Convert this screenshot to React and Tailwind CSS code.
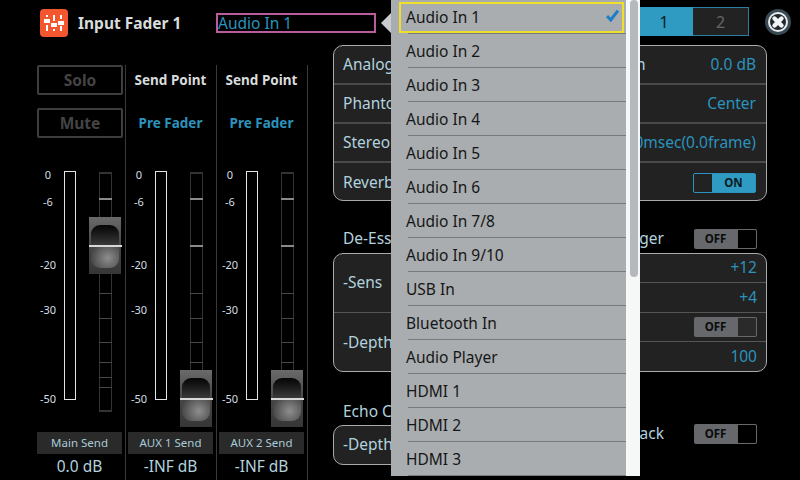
const font = { fontFamily: '"Noto Sans", "Open Sans", sans-serif' };

const scale = [
  { text: "0", y: 9 },
  { text: "-6", y: 36 },
  { text: "-20", y: 99 },
  { text: "-30", y: 144 },
  { text: "-50", y: 233 },
];

const ticks = [
  { y: 33, bright: true },
  { y: 80, bright: true },
  { y: 128 },
  { y: 153 },
  { y: 177 },
  { y: 197 },
  { y: 212 },
  { y: 222 },
];

const menuItems = [
  "Audio In 1",
  "Audio In 2",
  "Audio In 3",
  "Audio In 4",
  "Audio In 5",
  "Audio In 6",
  "Audio In 7/8",
  "Audio In 9/10",
  "USB In",
  "Bluetooth In",
  "Audio Player",
  "HDMI 1",
  "HDMI 2",
  "HDMI 3",
];

function Logo() {
  return (
    <div className="w-[28px] h-[28px] mt-[9px] rounded-[4px] bg-[#f4572f] shrink-0">
      <svg width="28" height="28" viewBox="0 0 28 28" fill="#fff">
        <rect x="6" y="6" width="2" height="2" />
        <rect x="4" y="10" width="6" height="4" />
        <rect x="6" y="16" width="2" height="6" />
        <rect x="13" y="6" width="2" height="6" />
        <rect x="11" y="14" width="6" height="4" />
        <rect x="13" y="20" width="2" height="2" />
        <rect x="20" y="6" width="2" height="4" />
        <rect x="18" y="12" width="6" height="4" />
        <rect x="20" y="17" width="2" height="5" />
      </svg>
    </div>
  );
}

function CloseIcon() {
  return (
    <svg width="26" height="26" viewBox="0 0 26 26" className="mt-[9px] ml-[16px] shrink-0">
      <circle cx="13" cy="13" r="13" fill="#3a4a55" />
      <circle cx="13" cy="13" r="10" fill="#e8eef0" />
      <circle cx="13" cy="13" r="8" fill="#20282e" />
      <path d="M9.5 9.5l7 7M16.5 9.5l-7 7" stroke="#f2f5f6" strokeWidth="4.4" strokeLinecap="round" />
    </svg>
  );
}

function Knob({ y }) {
  return (
    <div
      className="absolute left-[52px] w-[32px] h-[57px] bg-linear-to-b from-[#6a6a6a] via-[#474747] to-[#363636]"
      style={{ top: y }}
    >
      <div className="absolute left-[2px] right-[2px] top-[8px] h-[20px] rounded-t-[9px] bg-linear-to-b from-[#060606] to-[#3a3a3a]" />
      <div className="absolute left-[2px] right-[2px] top-[29px] h-[22px] rounded-b-[9px] bg-[radial-gradient(circle_at_60%_55%,#8e8e8e,#444_85%)]" />
      <div className="absolute left-0 right-[-1px] top-[28px] h-[2px] bg-[#d8d8d8]" />
    </div>
  );
}

function Fader({ knobY }) {
  return (
    <div className="relative h-[264px]">
      {scale.map((s) => (
        <span
          key={s.text}
          className="absolute left-0 w-[22px] -translate-y-1/2 text-center text-[11px] leading-none text-[#d4dfe4]"
          style={{ top: s.y }}
        >
          {s.text}
        </span>
      ))}
      <div className="absolute left-[27px] top-[6px] w-[12px] h-[229px] border border-[#e4e4e4]" />
      <div className="absolute left-[62px] top-[7px] w-[13px] h-[240px] border border-[#333] border-y-2" />
      {ticks.map((t) => (
        <div
          key={t.y}
          className={
            t.bright
              ? "absolute left-[62px] w-[13px] h-[2px] bg-[#8a8a8a]"
              : "absolute left-[62px] w-[13px] h-[1px] bg-[#484848]"
          }
          style={{ top: t.y }}
        />
      ))}
      <Knob y={knobY} />
    </div>
  );
}

function StripFooter({ label, value }) {
  return (
    <>
      <div className="mt-[3px] h-[22px] bg-[#2a2a2a] flex items-center justify-center text-[11.5px] text-[#a9cad8]">
        {label}
      </div>
      <div className="h-[26px] flex items-center justify-center text-[15.5px] text-[#b2d2df]">
        {value}
      </div>
    </>
  );
}

function SendHead() {
  return (
    <div className="h-[100px] flex flex-col items-center font-bold text-[13.5px]">
      <div className="h-[30px] flex items-center text-[#d8dcdc]">Send Point</div>
      <div className="h-[13px]" />
      <div className="h-[30px] flex items-center text-[#2b93bd]">Pre Fader</div>
    </div>
  );
}

function SendStrip({ label }) {
  return (
    <div className="w-[91px] h-full pl-[2px] border-r border-[#3a3a3a]">
      <div className="w-[85px]">
        <SendHead />
        <Fader knobY={205} />
        <StripFooter label={label} value="-INF dB" />
      </div>
    </div>
  );
}

function MainStrip() {
  return (
    <div className="w-[89px] h-full border-r border-[#3a3a3a]">
      <div className="w-[85px]">
        <div className="h-[100px] flex flex-col gap-[13px] w-[86px]">
          <div className="h-[30px] border-2 border-[#3e3e3e] rounded-[2px] pt-[1px] flex items-center justify-center font-bold text-[15.5px] text-[#444]">
            Solo
          </div>
          <div className="h-[30px] border-2 border-[#3e3e3e] rounded-[2px] pt-[1px] flex items-center justify-center font-bold text-[15.5px] text-[#444]">
            Mute
          </div>
        </div>
        <Fader knobY={52} />
        <StripFooter label="Main Send" value="0.0 dB" />
      </div>
    </div>
  );
}

function Toggle({ on, box }) {
  if (on) {
    return (
      <div className="w-[63px] h-[20px] rounded-[2px] border border-[#2b93bd] bg-[#2f9bc2] flex overflow-hidden">
        <div className="w-[18px] bg-[#222]" />
        <div className="flex-1 flex items-center justify-center text-[11.5px] font-bold text-[#0c1a20]">ON</div>
      </div>
    );
  }
  return (
    <div className="w-[63px] h-[20px] rounded-[2px] bg-[#66686c] flex overflow-hidden shrink-0">
      <div className="flex-1 flex items-center justify-center text-[11.5px] font-bold text-[#0b0b0b]">OFF</div>
      <div className={box + " w-[20px] border border-[#66686c] rounded-r-[2px]"} />
    </div>
  );
}

function Row({ label, children, last }) {
  return (
    <div
      className={
        last
          ? "h-[39px] flex items-center justify-between pl-[9px] pr-[10px]"
          : "h-[39px] flex items-center justify-between pl-[9px] pr-[10px] border-b-2 border-[#4a4a4a]"
      }
    >
      <span>{label}</span>
      {children}
    </div>
  );
}

function RightPanel() {
  return (
    <div className="ml-[25px] w-[434px] text-[15.5px] text-[#b2d2df]">
      <div className="h-[156px] border border-[#aaa] rounded-[10px] bg-[#222] overflow-hidden">
        <Row label="Analog">
          <span className="ml-auto mr-[65px]">Gain</span>
          <span className="text-[#2b93bd]">0.0 dB</span>
        </Row>
        <Row label="Phantom">
          <span className="text-[#2b93bd]">Center</span>
        </Row>
        <Row label="Stereo">
          <span className="text-[#2b93bd]">0.0msec(0.0frame)</span>
        </Row>
        <Row label="Reverb" last>
          <Toggle on />
        </Row>
      </div>

      <div className="mt-[26px] h-[24px] flex items-center pl-[10px] pr-[10px]">
        <span>De-Esser</span>
        <span className="ml-auto mr-[30px]">Trigger</span>
        <Toggle box="bg-black" />
      </div>

      <div className="mt-[2px] h-[119px] border border-[#aaa] rounded-[10px] bg-[#222] overflow-hidden flex">
        <div className="w-[200px] flex flex-col">
          <div className="h-[59px] flex items-center pl-[9px] border-b border-[#555]">-Sens</div>
          <div className="flex-1 flex items-center pl-[9px] pt-[2px]">-Depth</div>
        </div>
        <div className="flex-1 flex flex-col">
          <div className="h-[29px] flex items-center justify-end pr-[9px] border-b border-[#555] text-[#2b93bd]">+12</div>
          <div className="h-[30px] flex items-center justify-end pr-[9px] border-b border-[#555] text-[#2b93bd]">+4</div>
          <div className="h-[29px] flex items-center justify-end pr-[9px] border-b border-[#555]">
            <Toggle box="bg-[#2a2a2a]" />
          </div>
          <div className="flex-1 flex items-center justify-end pr-[9px] text-[#2b93bd]">100</div>
        </div>
      </div>

      <div className="mt-[28px] flex">
        <div className="w-[200px]">
          <div className="h-[24px] flex items-center pl-[10px]">Echo C</div>
          <div className="mt-[1px] h-[40px] border border-[#aaa] rounded-[10px] bg-[#222] flex items-center pl-[9px]">
            -Depth
          </div>
        </div>
        <div className="flex-1 mt-[24px] h-[20px] flex items-center justify-end pr-[10px]">
          <span className="mr-[30px]">Feedback</span>
          <Toggle box="bg-black" />
        </div>
      </div>
    </div>
  );
}

function Dropdown() {
  return (
    <>
      <div className="absolute left-[381px] top-[13px] w-0 h-0 border-y-[10px] border-y-transparent border-r-[10px] border-r-[#c9cccc]" />
      <div className="absolute left-[391px] top-0 w-[249px] h-[476px] flex bg-[#a9adb0] text-[15.5px] text-[#161616]">
        <div className="w-[235px]">
          {menuItems.map((item, i) => (
            <div key={item} className="relative h-[34px] pl-[15px] pt-[1px] flex items-center">
              <span className="leading-none">{item}</span>
              <div className="absolute left-[17px] right-0 bottom-0 h-[1px] bg-[#777b7e]" />
              {i === 0 && (
                <>
                  <div className="absolute left-[8px] right-[2px] top-[2px] h-[31px] border-2 border-[#eee02a]" />
                  <svg width="13" height="13" viewBox="0 0 12 12" className="absolute left-[215px] top-[9px]">
                    <path d="M1 6.5l3.4 3.6L11 1.5" fill="none" stroke="#1a7fc4" strokeWidth="2.8" />
                  </svg>
                </>
              )}
            </div>
          ))}
        </div>
        <div className="flex-1 bg-[#f6f8f8] pl-[4px]">
          <div className="w-[8px] h-[277px] rounded-[4px] bg-[#b5b8bd]" />
        </div>
      </div>
    </>
  );
}

export default function App() {
  return (
    <div className="relative w-[800px] h-[480px] bg-black overflow-hidden" style={font}>
      <div className="h-[45px] flex items-start pl-[40px] pr-[9px]">
        <Logo />
        <div className="ml-[10px] w-[138px] mt-[11px] font-bold text-[15.5px] leading-[24px] text-[#d8dcdc]">
          Input Fader 1
        </div>
        <div className="mt-[13px] w-[160px] h-[20px] border-2 border-[#b85c9e] pt-[1px] flex items-center text-[15.5px] text-[#2b93bd]">
          Audio In 1
        </div>
        <div className="ml-auto mt-[7px] flex h-[29px] text-[16px]">
          <div className="w-[58px] bg-[#2f9bc2] flex items-center justify-center text-[#0c1a20]">1</div>
          <div className="w-[56px] bg-[#222] border border-l-0 border-[#2b7f9f] flex items-center justify-center text-[#666]">2</div>
        </div>
        <CloseIcon />
      </div>

      <div className="flex h-[435px]">
        <div className="flex pl-[37px] pt-[20px] h-full">
          <MainStrip />
          <SendStrip label="AUX 1 Send" />
          <SendStrip label="AUX 2 Send" />
        </div>
        <RightPanel />
      </div>

      <Dropdown />
    </div>
  );
}
